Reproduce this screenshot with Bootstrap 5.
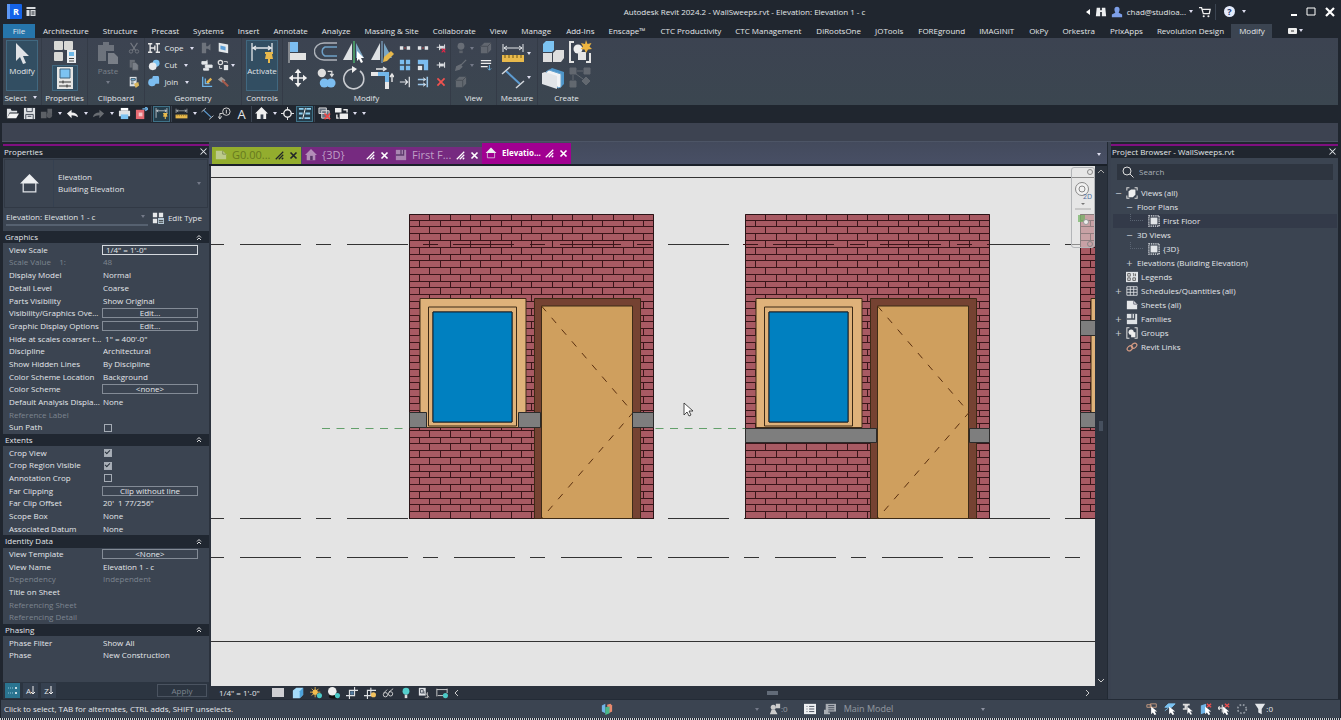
<!DOCTYPE html>
<html lang="en">
<head>
<meta charset="utf-8">
<meta name="viewport" content="width=device-width, initial-scale=1">
<title>Autodesk Revit 2024.2 - WallSweeps.rvt</title>
<link href="https://cdn.jsdelivr.net/npm/bootstrap@5.3.0/dist/css/bootstrap.min.css" rel="stylesheet">
<style>
:root{--ink:#20262f;--panel:#3b4451;--line:#2b323d;--txt:#e3e6ea;--dim:#7d8590;--mag:#800f80}
body{background:var(--ink);color:var(--txt);font:8px/12px "Open Sans","Noto Sans",sans-serif;overflow:hidden}
button,input,select{font:inherit;color:inherit;background:none;border:0;padding:0;border-radius:0}
button{display:flex;align-items:center;justify-content:center}
a{color:inherit;text-decoration:none}
svg{display:block;flex:none}
.ic{width:14px;height:14px}
.ic-s{width:12px;height:12px}
.ic-b{width:24px;height:24px}
.dimmed{opacity:.35}
.caret{width:9px;display:flex;justify-content:center}
.caret::after{content:"";border:2px solid transparent;border-top:3px solid #dde;border-bottom:0}
.titlebar{height:24px;padding:0 5px 0 3px}
.sp-l{flex:8}.sp-r{flex:3}
.winbtns{margin-left:42px}
.ribbon-tabs{height:14px;padding-left:3px}
.ribbon-tabs a{padding:0 7px;line-height:14px;white-space:nowrap}
.ribbon-tabs a:nth-child(odd):nth-child(n+13){padding-left:8px}
.ribbon-tabs a.file{background:#2675ab;width:32px;text-align:center;margin-right:1px}
.ribbon-tabs a.active{background:var(--panel)}
.ribbon{height:67px;margin:0 3px;background:linear-gradient(#3c4351,#3b4650)}
.rpanel{border-right:1px solid #343b47;display:flex;flex-direction:column;align-items:center;padding-top:1px;flex:none}
.rpanel:last-child{border:0}
.rbody{height:53px;display:flex;justify-content:center;align-items:center;width:100%}
.rlabel{line-height:12px;display:flex;align-items:center}
.w39{width:39px}.w46{width:46px}.w57{width:57px}.w97{width:97px}.w41{width:41px}.w168{width:168px}
.bigbtn{flex-direction:column;width:32px;height:51px;justify-content:flex-start;padding-top:1px}
.bigbtn.on,.tile.on{background:#324e62;outline:1px solid #416880;outline-offset:-1px}
.tile{width:26px;height:26px}
.g-small{display:grid;grid-auto-rows:17px;align-items:center;justify-items:center}
.g-start{justify-items:start}
.g-big{display:grid;grid-template-columns:repeat(4,28px);grid-auto-rows:26px;place-items:center}
.g-two{grid-template-columns:repeat(2,27px)}
.c3{grid-template-columns:repeat(3,18px)}
.qat{height:18px;padding-left:4px}
.qat button{width:17px;height:16px}
.qat svg{width:13px;height:13px}
.qat .on{background:#253d4b;outline:1px solid #3e7187;outline-offset:-1px}
.qat .glyph-a{font-size:13px}
.qsep{width:1px;height:16px;background:#3a4350;margin:0 1px}
.optbar{height:19px;margin:0 3px 0 2px;background:#3d4351;border-bottom:1px solid #4d5566}
.work{min-height:0}
.phead{height:12px;background:var(--ink);line-height:11px;padding:0 1px}
.props{width:206px;margin-left:3px;background:var(--panel);border-top:2px solid var(--mag);margin-top:2px}
.typebox{height:49px;margin:1px;border:1px solid #313945}
.typebox .pic{width:49px;border-right:1px solid #354050}
.typesel{height:18px;padding:0 3px}
.typesel .pick{height:17px;border-bottom:2px solid #566170}
.ptable{width:100%;height:431px;border-collapse:collapse;table-layout:fixed}
.ptable td,.ptable th{padding:0;white-space:nowrap;overflow:hidden;font-weight:400;line-height:10px;height:12px}
.ptable .sec th{background:#202731;padding:0 7px 0 2px;line-height:12px}
.ptable td:first-child{padding-left:6px;text-overflow:ellipsis}
.ptable .k{width:100px;padding:0}
.ptable .mute{color:var(--dim)}
.ptable button,.ptable .field{border:1px solid #838b96;width:96px;height:10px;line-height:8px;display:flex;margin-left:-1px}
.ptable .field{border:1px solid #d5d9de;padding-left:3px;display:block}
.ptable td:has(button),.ptable td:has(.field){overflow:visible}
.ptable input[type=checkbox]{appearance:none;width:8px;height:8px;border:1px solid #a4abb4;display:block;margin:1px 0 0 1px}
.ptable input:checked{background:#aab0b8}
.ptable input:checked::after{content:"";display:block;width:5px;height:3px;border:solid #27303b;border-width:0 0 1px 1px;transform:rotate(-45deg)}
.pfoot{height:17px;background:#2c3541;gap:3px;padding:0 2px 0 2px}
.pfoot .sq{width:15px;height:15px;background:#364150}
.pfoot .sq.on{background:#2a7490}
.pfoot .apply{width:50px;height:13px;border:1px solid #4a5360;color:var(--dim);line-height:10px}
.center{min-width:0;background:var(--line)}
.vtabs{height:24px;background:linear-gradient(#434a5c,#484f65);border-bottom:2px solid #1a2029;padding-left:3px}
.vtab{height:17px;width:90px;font-size:11px;padding:0 3px;background:#762a80;color:#bf9fc6}
.vtab.green{background:#93ad2e;color:#67791e;width:89px;margin-right:1px}
.vtab.active{height:21px;background:#a10091;color:#fff;font-size:8px;font-weight:700;width:89px}
.vtab span{margin-left:5px;flex:1;white-space:nowrap}
.vtab svg+svg{margin-left:5px}
.sheet{min-height:0;min-width:0;background:#e4e4e4;margin-left:2px;overflow:hidden}
.navbox{top:1px;right:0;width:24px;height:81px;border:1px solid #b3b5b8;border-radius:3px;background:#e8e8e880;align-items:center}
.vscroll{width:11px;margin-right:1px}
.vbar{height:13px;margin-left:2px;padding-left:8px;background:var(--line)}
.vbar .ic-s{margin-right:6px}
.browser{width:227px;margin:2px 3px 0 0;background:var(--panel);border-top:2px solid var(--mag)}
.dockgap{width:4px;background:#3a4250;border-left:1px solid #222a34}
.searchbox{margin:6px 5px 6px 6px;height:16px;background:#2e3540;padding:0 5px;gap:5px}
.searchbox input{width:100%;outline:0}
.searchbox input::placeholder{color:#aab0b8;opacity:1}
.tree{list-style:none;margin:0;padding:0 1px 0 2px}
.tree li{height:14px;display:flex;align-items:center;gap:3px;white-space:nowrap;padding-left:1px}
.tree .ex{width:9px;text-align:center;font-size:11px;color:#c5cbd3}
.tree .l1{padding-left:12px}.tree .l2{padding-left:35px}
.tree .l2::before{content:"";width:13px;height:7px;border:dotted #5a6472;border-width:0 0 1px 1px;margin:-7px 2px 0 -18px}
.tree .sel{background:#333a49}
.status{height:19px;background:#3b4451;margin:0 1px;padding-left:3px;border-top:1px solid #232b36}
.status .grow-a{flex:0 0 597px}.status .grow-b{flex:0 0 148px}
.status .opt{width:144px;font-size:9px}
.selbar{gap:6px;margin-right:67px}
.edge{height:2px;background:repeating-linear-gradient(90deg,#cfd3d8 0 1px,#20262f 1px 2px)}
</style>
</head>
<body class="d-flex flex-column vh-100">
<svg width="0" height="0" class="position-absolute" aria-hidden="true">
<defs>
<symbol id="i-arrow" viewBox="0 0 24 24"><path d="M6 2v18l4-4 3 7 3-1-3-7h6z" fill="#dfe2e6"/></symbol>
<symbol id="i-propgrid" viewBox="0 0 24 24"><g fill="#d9d9d6"><rect x="1" y="1" width="9" height="9" rx="1"/><rect x="11" y="1" width="9" height="9" rx="1"/><rect x="1" y="12" width="9" height="9" rx="1"/></g><path d="M14 10h9v13h-9z" fill="#e9edf0"/><path d="M16 12h5v4h-5z" fill="#6db8e8"/><path d="M16 18.500h5M16 21h5" stroke="#444"/></symbol>
<symbol id="i-prop" viewBox="0 0 24 24"><path d="M4 1h16v22H4z" fill="#e6e6e4"/><path d="M7 3h10v9H7z" fill="#7cc3f2" stroke="#3e637c"/><path d="M6 16h12M6 20h12M10 14.500v3M14 18.500v3" stroke="#333"/></symbol>
<symbol id="i-paste" viewBox="0 0 24 24"><path d="M2 4h5V1h6v3h5v6h-8v10H2z" fill="#c9cbce"/><path d="M12 12h6l4 4v7H12z" fill="#eee"/></symbol>
<symbol id="i-scis" viewBox="0 0 14 14"><path d="M3 1l6 9M11 1L5 10" stroke="#ddd" stroke-width="1.300"/><circle cx="3.500" cy="11" r="2" fill="none" stroke="#ddd"/><circle cx="10.500" cy="11" r="2" fill="none" stroke="#ddd"/></symbol>
<symbol id="i-copy" viewBox="0 0 14 14"><path d="M2 1h6v9H2z" fill="#bbb"/><path d="M5 4h4l3 3v6H5z" fill="#eee" stroke="#555" stroke-width=".6"/></symbol>
<symbol id="i-hide" viewBox="0 0 14 14"><path d="M1 1h8v9H1z" fill="#dfe2e5"/><path d="M3 3h3v4H3zM7 5v3" stroke="#39424f" fill="none"/><path d="M8 6l5 6M11 6v7M8 12h4" stroke="#bbb"/></symbol>
<symbol id="i-match" viewBox="0 0 14 14"><path d="M2 1h8v11H2z" fill="#dde1e5"/><path d="M3.500 3h5v2h-5zM3.500 7h3M3.500 9h3" stroke="#39505f" fill="#7cc3f2"/><path d="M7 9l5-2 1 4-4 3z" fill="#d9b65c"/></symbol>
<symbol id="i-cope" viewBox="0 0 14 14"><path d="M0 2h5M0 12h5M2.500 2v10M3 7h5M8 4v6M11 2v10M9 2h5M9 12h5" stroke="#e6e6e6" stroke-width="1.600" fill="none"/></symbol>
<symbol id="i-cut" viewBox="0 0 14 14"><circle cx="9.500" cy="5" r="4" fill="#7cc3f2"/><circle cx="5.500" cy="8.500" r="4.500" fill="#e8eaec"/></symbol>
<symbol id="i-join" viewBox="0 0 14 14"><path d="M5 3a4 4 0 018 0v6H9a4.500 4.500 0 11-4-6z" fill="#7cbdf0"/></symbol>
<symbol id="i-notch" viewBox="0 0 14 14"><path d="M1 1h5v4h2l3-3v8L8 8H6v5H1z" fill="#ccc"/></symbol>
<symbol id="i-face" viewBox="0 0 14 14"><path d="M2 1l11 2v10L2 11z" fill="#e5e9ec"/><path d="M4 4l6 1.500v4.500L4 8.500z" fill="#5d9fd8"/></symbol>
<symbol id="i-wall" viewBox="0 0 14 14"><path d="M1 3h6v3H1zM5 7h8v3H5zM3 11h6v2H3zM7 1v12" fill="#e3e6e9" stroke="#e3e6e9"/></symbol>
<symbol id="i-split" viewBox="0 0 14 14"><circle cx="4" cy="4" r="2.500" fill="none" stroke="#ddd" stroke-width="1.500"/><path d="M8 7h5v6H8z" fill="#e3e6e9"/><path d="M3 8v3h3M8 3h4v2" stroke="#ddd" fill="none"/></symbol>
<symbol id="i-demo" viewBox="0 0 14 14"><path d="M2 1v11h11M5 3v6h5" stroke="#6fb5e8" stroke-width="1.500" fill="none"/><path d="M6 7l5-5 2 2-5 5z" fill="#e5b34f"/></symbol>
<symbol id="i-hammer" viewBox="0 0 14 14"><path d="M1 4l4-3 5 4-4 3z" fill="#999"/><path d="M6 5l7 7" stroke="#a55b4c" stroke-width="2.500"/></symbol>
<symbol id="i-activate" viewBox="0 0 24 24"><path d="M2 2v18M22 2v10M3 7h18M6 5L3 7l3 2M18 5l3 2-3 2" stroke="#e3e6e9" fill="none" stroke-width="1.300"/><path d="M15 11h8v2h-1l1 5h-3v4h-2v-4h-3l1-5h-1z" fill="#e8b94c"/></symbol>
<symbol id="i-align" viewBox="0 0 24 24"><path d="M3 2v21" stroke="#ccc"/><path d="M4 2h8v10H4z" fill="#7cbdf0"/><path d="M4 13h16v7H4z" fill="#e3e3e3"/></symbol>
<symbol id="i-offset" viewBox="0 0 24 24"><path d="M23 3H10a9 8 0 000 17h13" stroke="#aeb3ba" fill="none" stroke-width="1.400"/><path d="M23 7H11a5 5 0 000 9h12" stroke="#6fa1c8" fill="none" stroke-width="1.400"/></symbol>
<symbol id="i-mirror" viewBox="0 0 24 24"><path d="M10 3v17H1z" fill="#dfe2e5"/><path d="M12 1v22" stroke="#4cae6c" stroke-width="1.500"/><path d="M14 3l8 15h-8z" fill="#7aa6c4"/><path d="M15 11v10l2-2 2 4 2-1-2-4h3z" fill="#fff"/></symbol>
<symbol id="i-mirror2" viewBox="0 0 24 24"><path d="M10 3v17H1z" fill="#dfe2e5"/><path d="M12 1v22" stroke="#8ab8dc"/><path d="M14 3l8 15h-8z" fill="#7aa6c4"/><path d="M13 22l1-5 7-6 3 3-7 7z" fill="#e8b94c"/></symbol>
<symbol id="i-move" viewBox="0 0 24 24"><path d="M12 1l4 5h-3v5h5V8l5 4-5 4v-3h-5v5h3l-4 5-4-5h3v-5H6v3l-5-4 5-4v3h5V6H8z" fill="#f2f2f2"/></symbol>
<symbol id="i-copyc" viewBox="0 0 24 24"><circle cx="7" cy="6" r="5" fill="#dedede"/><circle cx="10" cy="18" r="5.500" fill="#7cbdf0"/><circle cx="18" cy="18" r="5.500" fill="#7cbdf0"/><path d="M14 4h5v5M17 7l2 3 2-3" stroke="#ddd" fill="none" stroke-width="1.500"/></symbol>
<symbol id="i-rot" viewBox="0 0 24 24"><path d="M18 5a10 10 0 11-8-2" stroke="#c9ccd1" fill="none" stroke-width="1.600"/><path d="M10 0l5 3-5 4z" fill="#eee"/></symbol>
<symbol id="i-trim" viewBox="0 0 24 24"><path d="M1 8h16v15" stroke="#e6e6e6" stroke-width="4" fill="none"/><path d="M8 8h9v8" stroke="#72b7ea" stroke-width="4" fill="none"/><path d="M6 3h9M13 1l3 2-3 2M22 16V9M20 11l2-3 2 3" stroke="#e6e6e6" fill="none" stroke-width="1.400"/></symbol>
<symbol id="i-sp" viewBox="0 0 14 14"><path d="M1 5h4v4H1zM9 5h4v4H9z" fill="#e3e6e9"/><path d="M6 7h2" stroke="#e55"/></symbol>
<symbol id="i-array" viewBox="0 0 14 14"><path d="M1 1h5v5H1zM8 1h5v5H8zM1 8h5v5H1zM8 8h5v5H8z" fill="#7cbdf0"/></symbol>
<symbol id="i-scale" viewBox="0 0 14 14"><path d="M1 1h12v12H8V6H1z" fill="#7cbdf0"/><path d="M1 8h5v5H1z" fill="#e3e6e9"/></symbol>
<symbol id="i-ext" viewBox="0 0 14 14"><path d="M1 7h8M7 4l3 3-3 3M12 1v12" stroke="#e3e6e9" stroke-width="1.400" fill="none"/></symbol>
<symbol id="i-ext2" viewBox="0 0 14 14"><path d="M1 4h9M1 10h9M12 1v12" stroke="#9cc8ea" stroke-width="1.800" fill="none"/><path d="M7 2l3 2-3 2M7 8l3 2-3 2" stroke="#eee" fill="none"/></symbol>
<symbol id="i-pin" viewBox="0 0 14 14"><path d="M1 7h4M5 3v8M12 3v8" stroke="#dcdfe3" stroke-width="1.500"/><path d="M5 5h6v4H5z" fill="#dcdfe3"/></symbol>
<symbol id="i-pinx" viewBox="0 0 14 14"><path d="M1 6h4M5 2v8M12 2v8" stroke="#dcdfe3" stroke-width="1.400"/><path d="M5 4h6v4H5z" fill="#dcdfe3"/><path d="M8 8l5 5M13 8l-5 5" stroke="#e24" stroke-width="1.500"/></symbol>
<symbol id="i-x" viewBox="0 0 14 14"><path d="M2 2l10 10M12 2L2 12" stroke="#f0524f" stroke-width="2.400"/></symbol>
<symbol id="i-bulb" viewBox="0 0 14 14"><circle cx="7" cy="5" r="4" fill="#bbb"/><path d="M5 10h4v3H5z" fill="#999"/></symbol>
<symbol id="i-box" viewBox="0 0 14 14"><path d="M1 5l4-4h8v8l-4 4H1z" fill="#aaa"/><path d="M1 5h8v8M9 5l4-4" stroke="#555" fill="none"/></symbol>
<symbol id="i-brush" viewBox="0 0 14 14"><path d="M13 1L6 8M6 7l-4 2-1 4 4-1 3-3z" stroke="#bbb" stroke-width="1.500" fill="#bbb"/></symbol>
<symbol id="i-lw" viewBox="0 0 14 14"><path d="M1 2h12M1 5h12M1 9h8" stroke="#eee" stroke-width="1.500"/><path d="M11 7v6M9 11l2 2 2-2" stroke="#6db8e8" fill="none"/></symbol>
<symbol id="i-meas" viewBox="0 0 24 24"><path d="M2 3v8M22 3v8M3 7h18M6 5L3 7l3 2M18 5l3 2-3 2" stroke="#e3e6e9" fill="none"/><path d="M1 14h22v7H1z" fill="#e8b94c"/><path d="M4 14v3M8 14v3M12 14v3M16 14v3M20 14v3" stroke="#6d5413"/></symbol>
<symbol id="i-dim" viewBox="0 0 24 24"><path d="M5 6l14 13" stroke="#5d9bd0" stroke-width="2"/><path d="M1 9l8-7M15 23l8-7" stroke="#d4d8dd" stroke-width="1.500"/></symbol>
<symbol id="i-create" viewBox="0 0 24 24"><path d="M2 4l3-3h8v9l-2 2H2z" fill="#7cc3f2"/><path d="M2 13h9v9H2zM12 13l3-3h8v8l-3 4h-8z" fill="#dedede"/></symbol>
<symbol id="i-group" viewBox="0 0 24 24"><path d="M6 2H2v20h4M18 22h4v-9" stroke="#e3e3e3" fill="none" stroke-width="2"/><circle cx="10" cy="9" r="4.500" fill="#eee"/><path d="M10 12h8v8h-8z" fill="#e5e5e5"/><path d="M18 0l1.500 4 4-1-2 3.500L24 9l-4 .500L18 13l-1.500-3.500-4-.500 2.500-2.500-2-3.500 4 1z" fill="#eeb540"/></symbol>
<symbol id="i-assem" viewBox="0 0 24 24"><path d="M8 4l3-2 12 4v12l-3 3z" fill="#4d95c9"/><path d="M5 6l3-2 12 4v13l-3 1z" fill="#f1f3f5" stroke="#68a4d0"/><path d="M1 7l3-1 12 4v13L1 18z" fill="#e2e5e8"/></symbol>
<symbol id="i-parts" viewBox="0 0 24 24"><path d="M2 2h6v6H2zM16 2h6v6h-6zM2 15h6v6H2zM14 15l4-4 4 4-4 4zM9 5h6M5 9v5M8 8l7 5" fill="#aaa" stroke="#aaa"/></symbol>
<symbol id="i-open" viewBox="0 0 14 14"><path d="M1 12V2h4l1 2h6v2H4z" fill="#dfe2e5"/><path d="M4 7h10l-3 5H1z" fill="#f5f5f5"/></symbol>
<symbol id="i-save" viewBox="0 0 14 14"><path d="M1 1h12v12H1z" fill="#dfe2e5"/><path d="M4 1v4h6V1M3 13V8h8v5M5 10h4" stroke="#39424f" fill="none"/></symbol>
<symbol id="i-sync" viewBox="0 0 14 14"><path d="M1 5h6v7H1zM8 2h5v6H8z" fill="#ccc"/><circle cx="10" cy="9" r="3" fill="#bbb"/></symbol>
<symbol id="i-undo" viewBox="0 0 14 14"><path d="M1 7l5-4v3q6 0 7 5-3-2-7-2v3z" fill="#f0f0f0"/></symbol>
<symbol id="i-print" viewBox="0 0 14 14"><path d="M3 1h8v3H3z" fill="#fff"/><path d="M1 4h12v6H1z" fill="#dfe2e5"/><path d="M3 8h8v5H3z" fill="#7cc3f2"/></symbol>
<symbol id="i-pdf" viewBox="0 0 14 14"><path d="M1 3h9v10H1z" fill="#e56a72"/><path d="M4 6h4v4H4z" fill="#f6c3c6"/><path d="M8 2h4M11 0l3 2-3 2" stroke="#6fb5e8" stroke-width="1.500" fill="none"/></symbol>
<symbol id="i-tag" viewBox="0 0 14 14"><circle cx="9" cy="5" r="4" fill="none" stroke="#ddd"/><path d="M9 3v4M5 7H2v5M0 10l2 3 2-3" stroke="#ddd" fill="none"/></symbol>
<symbol id="i-home" viewBox="0 0 14 14"><path d="M7 0l7 7h-2v6H2V7H0z" fill="#f0f0f0"/><path d="M6 8h3v5H6z" fill="#39424f"/></symbol>
<symbol id="i-homeo" viewBox="0 0 20 20"><path d="M10 1l9 9H1z" fill="#eef0f2"/><path d="M4 9v9h12V9" stroke="#dfe2e6" stroke-width="1.200" fill="none"/></symbol>
<symbol id="i-sec" viewBox="0 0 14 14"><circle cx="7" cy="7" r="4" fill="none" stroke="#eee" stroke-width="1.500"/><path d="M7 0v3M7 11v3M0 7h3M11 7h3" stroke="#eee"/></symbol>
<symbol id="i-thin" viewBox="0 0 14 14"><path d="M1 2h5M9 2h5M1 7h4M8 7h5M1 12h3M7 12h6" stroke="#8fd0f0" stroke-width="2"/><path d="M8 1L5 13" stroke="#fff"/></symbol>
<symbol id="i-close" viewBox="0 0 14 14"><path d="M1 1h8v6H1zM4 4h8v8H4z" fill="#68717e" stroke="#ddd"/><path d="M7 7l6 6M13 7l-6 6" stroke="#f04848" stroke-width="1.800"/></symbol>
<symbol id="i-switch" viewBox="0 0 14 14"><path d="M0 1h7v5H0zM5 7h9v6H5z" fill="#eee"/><path d="M9 3h4v3M2 8v4h2" stroke="#eee" stroke-width="1.500" fill="none"/></symbol>
<symbol id="i-sheet" viewBox="0 0 14 14"><path d="M1 2h8l4 4v6H1z" fill="#e6e8ea"/><path d="M9 2v4h4" fill="none" stroke="#667"/></symbol>
<symbol id="i-plan" viewBox="0 0 14 14"><path d="M3 3h8v8H3z" fill="#e2e5e8"/><path d="M1 1h12v12H1z" fill="none" stroke="#e2e5e8" stroke-width="1.500" stroke-dasharray="1.500 1"/></symbol>
<symbol id="i-fam" viewBox="0 0 14 14"><path d="M1 1h12v12H1z" fill="#dfe2e5"/><path d="M7 1v6H1M7 7h3V1" stroke="#444d5a" fill="none" stroke-width="1.500"/></symbol>
<symbol id="i-views" viewBox="0 0 14 14"><path d="M4 1H1v3M1 10v3h3M10 13h3v-3M13 4V1h-3" stroke="#ddd" fill="none" stroke-width="1.200"/><path d="M3 5l3-2h5v6l-3 3H3z" fill="#eee"/></symbol>
<symbol id="i-grp" viewBox="0 0 14 14"><path d="M4 1H1v12h3M10 13h3V1h-3" stroke="#ddd" fill="none" stroke-width="1.200"/><circle cx="6" cy="6" r="3" fill="#eee"/><path d="M6 6h5v6H6z" fill="#eee"/></symbol>
<symbol id="i-leg" viewBox="0 0 14 14"><path d="M0 1h14v12H0z" fill="#e2e5e8"/><path d="M2 3h3v3H2zM8 3h1v3M11 3v3M2 8h3v3H2zM8 8h3v3H8z" fill="none" stroke="#555"/></symbol>
<symbol id="i-sch" viewBox="0 0 14 14"><path d="M1 2h12v10H1zM1 5h12M1 8.500h12M5 2v10M9 2v10" fill="none" stroke="#dfe2e5"/></symbol>
<symbol id="i-link" viewBox="0 0 14 14"><ellipse cx="4.500" cy="8.500" rx="3.500" ry="2.500" transform="rotate(-40 4.500 8.500)" fill="none" stroke="#d59b83" stroke-width="1.400"/><ellipse cx="9.500" cy="5.500" rx="3.500" ry="2.500" transform="rotate(-40 9.500 5.500)" fill="none" stroke="#d59b83" stroke-width="1.400"/></symbol>
<symbol id="i-type" viewBox="0 0 14 14"><path d="M1 1h5v5H1zM8 1h5v5H8zM1 8h5v5H1z" fill="#e6e8ea"/><path d="M7 7h7v7H7z" fill="#b5c7d4"/><path d="M8 10h5M8 12h5" stroke="#333"/></symbol>
<symbol id="i-hatch" viewBox="0 0 12 12"><path d="M1 11L11 1M5 11l6-6M9 11l2-2" stroke="currentColor" stroke-width="1.600"/></symbol>
<symbol id="i-cl" viewBox="0 0 12 12"><path d="M2 2l8 8M10 2l-8 8" stroke="currentColor" stroke-width="2.200"/></symbol>
<symbol id="i-clt" viewBox="0 0 12 12"><path d="M2 2l8 8M10 2l-8 8" stroke="currentColor" stroke-width="1.400"/></symbol>
<symbol id="i-dbl" viewBox="0 0 12 12"><path d="M2 6l4-4 4 4M2 11l4-4 4 4" stroke="#eee" stroke-width="1.800" fill="none"/></symbol>
<symbol id="i-cube" viewBox="0 0 14 14"><path d="M1 4l4-3h8v8l-4 4H1z" fill="#a5dcfa"/><path d="M9 5l4-4v8l-4 4z" fill="#4da2db"/></symbol>
<symbol id="i-sun" viewBox="0 0 14 14"><circle cx="6" cy="6" r="3" fill="#f3bd4e"/><path d="M6 0v12M0 6h12M2 2l8 8M10 2l-8 8" stroke="#f3bd4e"/><circle cx="11" cy="10" r="3" fill="#4cc9c6"/></symbol>
<symbol id="i-shad" viewBox="0 0 14 14"><ellipse cx="7" cy="11" rx="6" ry="2.500" fill="#111"/><circle cx="5" cy="5" r="5" fill="#eee"/><circle cx="11" cy="10" r="3" fill="#4cc9c6"/></symbol>
<symbol id="i-crop" viewBox="0 0 14 14"><path d="M0 10h10V0M4 14V4h10" stroke="#dfe2e5" fill="none" stroke-width="1.300"/><path d="M5 5h4v4H5z" fill="#547ca0"/></symbol>
<symbol id="i-crop2" viewBox="0 0 14 14"><path d="M0 10h8V1M4 14V4h10" stroke="#dfe2e5" fill="none" stroke-width="1.300"/><circle cx="11" cy="9" r="3" fill="#f3c25e"/></symbol>
<symbol id="i-glass" viewBox="0 0 14 14"><circle cx="4" cy="9" r="2.500" fill="none" stroke="#ddd"/><circle cx="10" cy="8" r="2.500" fill="none" stroke="#ddd"/><path d="M2 7l4-4M8 6l5-4" stroke="#ddd"/></symbol>
<symbol id="i-lamp" viewBox="0 0 14 14"><circle cx="7" cy="5" r="4" fill="#55d0cd"/><path d="M5.500 9h3v4h-3z" fill="#ddd"/></symbol>
<symbol id="i-cons" viewBox="0 0 14 14"><path d="M1 2v9M13 2v5M1 3h12M2 10h7" stroke="#ddd" fill="none"/><circle cx="11" cy="10" r="3" fill="#4cc9c6"/></symbol>
<symbol id="i-selr" viewBox="0 0 14 14"><path d="M1 2h5v3H1zM5 1h7v4H5z" fill="none" stroke="#d0a184"/><path d="M6 4v9l2-2 2 3 2-1-2-3h3z" fill="#fff"/></symbol>
<symbol id="i-selb" viewBox="0 0 14 14"><path d="M1 5l4-4h8L9 5zM1 9l4-3" fill="#7cc3f2" stroke="#7cc3f2"/><path d="M6 4v9l2-2 2 3 2-1-2-3h3z" fill="#fff"/></symbol>
<symbol id="i-selp" viewBox="0 0 14 14"><path d="M1 1h8v2H7v3h2v2H1V6h2V3H1z" fill="#ddd"/><path d="M6 4v9l2-2 2 3 2-1-2-3h3z" fill="#fff" stroke="#3b4451" stroke-width=".5"/></symbol>
<symbol id="i-self" viewBox="0 0 14 14"><path d="M1 3l6-2v10l-6 2z" fill="#6fb5e8"/><path d="M6 4v9l2-2 2 3 2-1-2-3h3z" fill="#fff"/><path d="M8 1l5 4M13 1L8 5" stroke="#f04f4f" stroke-width="1.500"/></symbol>
<symbol id="i-seld" viewBox="0 0 14 14"><path d="M0 6h8M5 2v9M2 4L0 6l2 2" stroke="#ddd" stroke-width="1.300" fill="none"/><path d="M6 4v9l2-2 2 3 2-1-2-3h3z" fill="#fff"/><path d="M8 1l5 4M13 1L8 5" stroke="#f04f4f" stroke-width="1.500"/></symbol>
<symbol id="i-gear" viewBox="0 0 14 14"><circle cx="7" cy="7" r="5" fill="none" stroke="#9097a0" stroke-width="2" stroke-dasharray="2 2"/></symbol>
<symbol id="i-filt" viewBox="0 0 14 14"><path d="M1 1h12L9 7v6l-4-2V7z" fill="#e3e6e9"/></symbol>
<symbol id="i-person" viewBox="0 0 14 14"><path d="M4 4a3 3 0 116 0c0 2-1 3-1 4l4 2v3H1v-3l4-2c0-1-1-2-1-4z" fill="#7d9fe8"/></symbol>
<symbol id="i-bino" viewBox="0 0 14 14"><path d="M2 2h4v3h2V2h4l1 10H8V7H6v5H1z" fill="#eceef0"/></symbol>
<symbol id="i-cart" viewBox="0 0 14 14"><path d="M0 2h3l2 7h7l1-5H4" stroke="#eee" stroke-width="1.500" fill="none"/><circle cx="5.500" cy="12" r="1.200" fill="#eee"/><circle cx="11" cy="12" r="1.200" fill="#eee"/></symbol>
<symbol id="i-ppl" viewBox="0 0 14 14"><circle cx="5" cy="5" r="3" fill="#ccc"/><path d="M1 13l2-5h4l3 5zM8 1h5v5H8z" fill="#ccc"/></symbol>
<symbol id="i-tri" viewBox="0 0 14 14"><path d="M1 3l4-2v11l-4-2z" fill="#6fb5e8"/><path d="M7 2l4-1 2 2v7l-4 2z" fill="#e8896d"/><path d="M5 5l5-1v8l-5 2z" fill="#4bb889"/></symbol>
<symbol id="i-doc" viewBox="0 0 14 14"><path d="M0 1h14v12H0z" fill="#eef0f2"/><path d="M3 4h1M6 4h6M3 7h1M6 7h6M3 10h1M6 10h6" stroke="#39424f"/></symbol>
<symbol id="i-docs" viewBox="0 0 14 14"><path d="M2 1h12v9H2z" fill="#cfd2d6"/><path d="M5 3h7M5 5.500h7M5 8h7" stroke="#39424f"/><path d="M0 8h5v3h2v2H0z" fill="#cfd2d6"/></symbol>
</defs></svg>

<header class="titlebar d-flex align-items-center">
  <svg class="ms-1" width="15" height="15" viewBox="0 0 15 15"><rect width="15" height="15" rx="1" fill="#1563e8"/><path d="M0 0h3v15H0z" fill="#5c97f5"/><text x="9" y="11" font-size="9" font-weight="700" fill="#fff" text-anchor="middle">R</text></svg>
  <svg class="ms-1" width="10" height="9" viewBox="0 0 9 9"><path d="M0 0h9v2H0zM0 3h3v6H0zM4 3h5v6H4z" fill="#d7dade"/><path d="M5 5h3M5 7h3" stroke="#20262f"/></svg>
  <span class="sp-l"></span>
  <span class="text-nowrap">Autodesk Revit 2024.2 - WallSweeps.rvt - Elevation: Elevation 1 - c</span>
  <span class="sp-r"></span>
  <svg width="5" height="6" viewBox="0 0 5 6"><path d="M4 0v6L0 3z" fill="#fff"/></svg>
  <button class="ms-1" aria-label="Search"><svg class="ic-s"><use href="#i-bino"/></svg></button>
  <button class="ms-1 text-nowrap"><svg class="ic-s me-1"><use href="#i-person"/></svg>chad@studioa...<span class="caret"></span></button>
  <button class="ms-1" aria-label="Cart"><svg class="ic-s"><use href="#i-cart"/></svg></button>
  <span class="qsep ms-1 me-2"></span>
  <button aria-label="Help"><svg width="11" height="11" viewBox="0 0 11 11"><circle cx="5.500" cy="5.500" r="5.500" fill="#e4ebfb"/><text x="5.500" y="9" font-size="9" font-weight="700" fill="#213a72" text-anchor="middle">?</text></svg><span class="caret ms-1"></span></button>
  <div class="winbtns d-flex align-items-center gap-2">
    <button aria-label="Minimize"><svg width="8" height="9"><path d="M1 8h6" stroke="#fff" stroke-width="2"/></svg></button>
    <button aria-label="Maximize"><svg width="10" height="9"><path d="M1 1h8v7H1z" stroke="#fff" fill="none"/></svg></button>
    <button class="text-white" aria-label="Close"><svg width="12" height="12"><use href="#i-cl"/></svg></button>
  </div>
</header>

<nav class="ribbon-tabs d-flex" aria-label="Ribbon tabs">
  <a href="#" class="file">File</a><a href="#">Architecture</a><a href="#">Structure</a><a href="#">Precast</a><a href="#">Systems</a><a href="#">Insert</a><a href="#">Annotate</a><a href="#">Analyze</a><a href="#">Massing &amp; Site</a><a href="#">Collaborate</a><a href="#">View</a><a href="#">Manage</a><a href="#">Add-Ins</a><a href="#">Enscape™</a><a href="#">CTC Productivity</a><a href="#">CTC Management</a><a href="#">DiRootsOne</a><a href="#">JOTools</a><a href="#">FOREground</a><a href="#">IMAGINiT</a><a href="#">OkPy</a><a href="#">Orkestra</a><a href="#">PrlxApps</a><a href="#">Revolution Design</a><a href="#" class="active">Modify</a>
  <button class="ms-3" aria-label="Ribbon display"><svg width="9" height="6"><rect width="9" height="6" rx="1" fill="#eee"/><path d="M3 3h3" stroke="#333"/></svg><span class="caret"></span></button>
</nav>

<section class="ribbon d-flex">
  <div class="rpanel w39"><div class="rbody"><button class="bigbtn on"><svg class="ic-b"><use href="#i-arrow"/></svg><span>Modify</span></button></div><div class="rlabel">Select<span class="caret ms-1"></span></div></div>
  <div class="rpanel w46"><div class="rbody flex-column"><button class="tile" aria-label="Type properties"><svg class="ic-b"><use href="#i-propgrid"/></svg></button><button class="tile on" aria-label="Properties"><svg class="ic-b"><use href="#i-prop"/></svg></button></div><div class="rlabel">Properties</div></div>
  <div class="rpanel w57"><div class="rbody"><button class="bigbtn dimmed"><svg class="ic-b"><use href="#i-paste"/></svg><span class="mb-1">Paste</span><span class="caret"></span></button>
    <div class="g-small ms-1"><svg class="ic-s dimmed"><use href="#i-scis"/></svg><svg class="ic-s dimmed"><use href="#i-copy"/></svg><svg class="ic-s"><use href="#i-match"/></svg></div></div><div class="rlabel">Clipboard</div></div>
  <div class="rpanel w97"><div class="rbody">
    <div class="g-small g-start"><button><svg class="ic-s"><use href="#i-cope"/></svg><span class="ms-1">Cope</span><span class="caret ms-1"></span></button><button><svg class="ic-s"><use href="#i-cut"/></svg><span class="ms-1">Cut</span><span class="caret ms-1"></span></button><button><svg class="ic-s"><use href="#i-join"/></svg><span class="ms-1">Join</span><span class="caret ms-1"></span></button></div>
    <div class="g-small ms-1"><svg class="ic-s dimmed"><use href="#i-notch"/></svg><svg class="ic-s"><use href="#i-wall"/></svg><svg class="ic-s"><use href="#i-demo"/></svg></div>
    <div class="g-small ms-1"><svg class="ic-s"><use href="#i-face"/></svg><svg class="ic-s"><use href="#i-split"/></svg><svg class="ic-s"><use href="#i-hammer"/></svg></div><span class="caret"></span></div><div class="rlabel">Geometry</div></div>
  <div class="rpanel w41"><div class="rbody"><button class="bigbtn on"><svg class="ic-b"><use href="#i-activate"/></svg><span>Activate</span></button></div><div class="rlabel">Controls</div></div>
  <div class="rpanel w168"><div class="rbody">
    <div class="g-big"><svg class="ic-b"><use href="#i-align"/></svg><svg class="ic-b"><use href="#i-offset"/></svg><svg class="ic-b"><use href="#i-mirror"/></svg><svg class="ic-b"><use href="#i-mirror2"/></svg><svg width="20" height="20"><use href="#i-move"/></svg><svg width="20" height="20"><use href="#i-copyc"/></svg><svg class="ic-b"><use href="#i-rot"/></svg><svg class="ic-b"><use href="#i-trim"/></svg></div>
    <div class="g-small c3"><svg class="ic-s"><use href="#i-sp"/></svg><svg class="ic-s"><use href="#i-sp"/></svg><svg width="10" height="10"><use href="#i-pinx"/></svg><svg class="ic-s"><use href="#i-array"/></svg><svg class="ic-s"><use href="#i-scale"/></svg><svg width="10" height="10"><use href="#i-pin"/></svg><svg class="ic-s"><use href="#i-ext"/></svg><svg class="ic-s"><use href="#i-ext2"/></svg><svg width="10" height="10"><use href="#i-x"/></svg></div></div><div class="rlabel">Modify</div></div>
  <div class="rpanel w46"><div class="rbody">
    <div class="g-small g-start dimmed"><div class="d-flex align-items-center"><svg class="ic-s"><use href="#i-bulb"/></svg><span class="caret"></span></div><div class="d-flex align-items-center"><svg class="ic-s"><use href="#i-brush"/></svg><span class="caret"></span></div><svg class="ic-s"><use href="#i-box"/></svg></div>
    <div class="g-small ms-1"><svg class="ic-s dimmed"><use href="#i-box"/></svg><svg class="ic-s"><use href="#i-lw"/></svg><span></span></div></div><div class="rlabel">View</div></div>
  <div class="rpanel w41"><div class="rbody flex-column"><button><svg class="ic-b"><use href="#i-meas"/></svg><span class="caret"></span></button><button><svg class="ic-b"><use href="#i-dim"/></svg><span class="caret"></span></button></div><div class="rlabel">Measure</div></div>
  <div class="rpanel w57"><div class="rbody"><div class="g-big g-two"><svg class="ic-b"><use href="#i-create"/></svg><svg class="ic-b"><use href="#i-group"/></svg><svg class="ic-b"><use href="#i-assem"/></svg><svg class="ic-b dimmed"><use href="#i-parts"/></svg></div></div><div class="rlabel">Create</div></div>
</section>

<div class="qat d-flex align-items-center" id="qat"></div>
<div class="optbar"></div>

<main class="work d-flex flex-grow-1">
  <aside class="props d-flex flex-column flex-shrink-0">
    <div class="phead d-flex justify-content-between align-items-center">Properties<button aria-label="Close properties"><svg width="9" height="9"><use href="#i-clt"/></svg></button></div>
    <div class="typebox d-flex align-items-center">
      <div class="pic h-100 d-flex align-items-center justify-content-center"><svg width="21" height="21"><use href="#i-homeo"/></svg></div>
      <div class="flex-grow-1 ps-1">Elevation<br>Building Elevation</div><span class="caret me-1 dimmed"></span>
    </div>
    <div class="typesel d-flex align-items-center">
      <button class="pick flex-grow-1 justify-content-between me-1">Elevation: Elevation 1 - c<span class="caret dimmed"></span></button>
      <button class="me-1"><svg class="ic-s me-1"><use href="#i-type"/></svg>Edit Type</button>
    </div>
    <table class="ptable mt-1"><colgroup><col class="k"><col></colgroup><tbody id="props"></tbody></table>
    <div class="flex-grow-1"></div>
    <div class="pfoot d-flex align-items-center">
      <button class="sq on" aria-label="Group"><svg width="11" height="11" viewBox="0 0 11 11"><path d="M1 3h5M1 8h5" stroke="#8ec3d8" stroke-dasharray="1 1"/><circle cx="9" cy="3" r="1" fill="#fff"/><circle cx="9" cy="8" r="1" fill="#fff"/></svg></button>
      <button class="sq" aria-label="Sort ascending">A<svg width="4" height="9"><path d="M2 0v8M0 6l2 2 2-2" stroke="#eee" fill="none"/></svg></button>
      <button class="sq" aria-label="Sort descending">Z<svg width="4" height="9"><path d="M2 0v8M0 6l2 2 2-2" stroke="#eee" fill="none"/></svg></button>
      <button class="apply ms-auto" disabled>Apply</button>
    </div>
  </aside>

  <section class="center flex-grow-1 d-flex flex-column">
    <div class="vtabs d-flex align-items-end">
      <div class="vtab green d-flex align-items-center"><svg class="ic-s opacity-50"><use href="#i-sheet"/></svg><span>G0.00...</span><svg class="text-dark" width="9" height="9"><use href="#i-hatch"/></svg><svg class="text-dark" width="9" height="9"><use href="#i-cl"/></svg></div>
      <div class="vtab d-flex align-items-center"><svg class="ic-s opacity-50"><use href="#i-home"/></svg><span>{3D}</span><svg class="text-white" width="9" height="9"><use href="#i-hatch"/></svg><svg class="text-white" width="9" height="9"><use href="#i-cl"/></svg></div>
      <div class="vtab d-flex align-items-center"><svg class="ic-s opacity-50"><use href="#i-fam"/></svg><span>First F...</span><svg class="text-white" width="9" height="9"><use href="#i-hatch"/></svg><svg class="text-white" width="9" height="9"><use href="#i-cl"/></svg></div>
      <div class="vtab active d-flex align-items-center"><svg class="ic-s"><use href="#i-homeo"/></svg><span>Elevatio...</span><svg width="9" height="9"><use href="#i-hatch"/></svg><svg width="9" height="9"><use href="#i-cl"/></svg></div>
      <span class="caret ms-auto me-1 mb-2"></span>
    </div>
    <div class="d-flex flex-grow-1 work">
      <div class="sheet flex-grow-1 position-relative">
        <svg class="w-100 h-100" viewBox="211 166 884 521" preserveAspectRatio="xMinYMin slice" role="img" aria-label="Wall elevation">
          <defs>
            <path id="bricks" stroke="#3a1519" stroke-width="1" fill="none" shape-rendering="crispEdges"/>
            <g id="bay">
              <path d="M0 0h245v305H0z" fill="#a85a63"/>
              <use href="#bricks"/>
              <path d="M.500 .500h244v304H.500z" fill="none" stroke="#2a1417"/>
              <g stroke="#3d2a16">
                <path d="M11 84.500h106v129H11z" fill="#dfb27a"/>
                <path d="M19.500 93h88v119h-88zM24 98h79v110H24z" fill="#dfb27a"/>
                <path d="M24 98h79v110H24z" fill="#0080c0" stroke="#123"/>
                <path d="M125.500 84.500h106v220h-106z" fill="#754232"/>
                <path d="M132.500 92h91v212.500h-91z" fill="#cf9f5e"/>
                <path d="M132.500 92L224 198.500 132.500 304.500" fill="none" stroke="#5b3010" stroke-dasharray="7 8.500"/>
              </g>
            </g>
          </defs>
          <g stroke="#333" shape-rendering="crispEdges">
            <path d="M211 177.500h884M211 641.500h884"/>
            <path d="M133 244.500h962M133 518.500h962M133 557.500h962" stroke-dasharray="61 15 15 16"/>
          </g>
          <path d="M322 428.500h430" stroke="#63a06b" stroke-dasharray="8 6.500"/>
          <use href="#bay" x="409" y="214"/><use href="#bay" x="745" y="214"/><use href="#bay" x="1080" y="214"/>
          <path d="M423 244.500h228M743 244.500h246" stroke="#3a1519" stroke-dasharray="15 15 61 16" shape-rendering="crispEdges"/>
          <g fill="#7e7e7e" stroke="#2b2b2b">
            <path d="M409.500 412.500h17v15h-17zM518.500 412.500h22v15h-22zM632.500 412.500h21v15h-21zM745.500 428.500h131v14h-131zM969.500 428.500h20v14h-20zM1080.500 412.500h20v15h-20zM1080.500 320.500h20v15h-20z"/>
          </g>
          <path d="M684 403v12l3-3 2 4 2-1-2-4h4z" fill="#fff" stroke="#222" stroke-width=".8"/>
        </svg>
        <div class="navbox position-absolute d-flex flex-column">
          <svg width="22" height="80" viewBox="0 0 22 80"><circle cx="18" cy="4" r="2.500" fill="none" stroke="#888"/><circle cx="10" cy="21" r="6.500" fill="#f1f1f1" stroke="#888"/><circle cx="10" cy="21" r="3" fill="none" stroke="#888"/><text x="11" y="31" font-size="7" fill="#4a6b9d">2D</text><path d="M9 35h4l-2 2z" fill="#777"/><path d="M3 41h16" stroke="#aaa"/><path d="M6 47h7v7H6z" fill="#6fb160" opacity=".7"/><circle cx="14" cy="54" r="2.500" fill="#eee" stroke="#999"/><circle cx="18" cy="76" r="2.500" fill="none" stroke="#888"/></svg>
        </div>
      </div>
      <div class="vscroll d-flex flex-column align-items-center justify-content-between"><svg width="8" height="10" viewBox="0 0 8 10"><path d="M1 7l3-3 3 3" stroke="#aaa" fill="none"/></svg><svg width="4" height="10"><rect width="4" height="10" fill="#46505e"/></svg><svg width="8" height="10" viewBox="0 0 8 10"><path d="M1 3l3 3 3-3" stroke="#ccc" fill="none"/></svg></div>
    </div>
    <div class="vbar d-flex align-items-center">
      <span class="text-nowrap me-2">1/4" = 1'-0"</span>
      <svg width="12" height="9" class="ms-1 me-2"><rect width="12" height="9" fill="#cfcfd3"/></svg><svg class="ic-s"><use href="#i-cube"/></svg><svg class="ic-s"><use href="#i-sun"/></svg><svg class="ic-s"><use href="#i-shad"/></svg><svg class="ic-s"><use href="#i-crop"/></svg><svg class="ic-s"><use href="#i-crop2"/></svg><svg class="ic-s"><use href="#i-glass"/></svg><svg class="ic-s"><use href="#i-lamp"/></svg><svg class="ic-s"><use href="#i-hide"/></svg><svg class="ic-s"><use href="#i-cons"/></svg><svg width="6" height="8" viewBox="0 0 6 8"><path d="M4 1L1 4l3 3" stroke="#ccc" fill="none"/></svg>
      <span class="flex-grow-1 d-flex justify-content-center"><svg width="11" height="4"><rect width="11" height="4" fill="#626b78"/></svg></span><svg class="me-3" width="6" height="8" viewBox="0 0 6 8"><path d="M1 1l3 3-3 3" stroke="#ccc" fill="none"/></svg>
    </div>
  </section>
  <div class="dockgap"></div>

  <aside class="browser flex-shrink-0">
    <div class="phead d-flex justify-content-between align-items-center">Project Browser - WallSweeps.rvt<button aria-label="Close browser"><svg width="9" height="9"><use href="#i-clt"/></svg></button></div>
    <label class="searchbox d-flex align-items-center"><svg width="12" height="12" viewBox="0 0 12 12"><circle cx="5" cy="5" r="4" fill="none" stroke="#ddd"/><path d="M8 8l3.500 3.500" stroke="#ddd"/></svg><input type="text" placeholder="Search" aria-label="Search project browser"></label>
    <ul class="tree">
      <li><span class="ex">−</span><svg class="ic-s"><use href="#i-views"/></svg>Views (all)</li>
      <li class="l1"><span class="ex">−</span>Floor Plans</li>
      <li class="l2 sel"><svg class="ic-s"><use href="#i-plan"/></svg>First Floor</li>
      <li class="l1"><span class="ex">−</span>3D Views</li>
      <li class="l2"><svg class="ic-s"><use href="#i-plan"/></svg>{3D}</li>
      <li class="l1"><span class="ex">+</span>Elevations (Building Elevation)</li>
      <li><span class="ex"></span><svg class="ic-s"><use href="#i-leg"/></svg>Legends</li>
      <li><span class="ex">+</span><svg class="ic-s"><use href="#i-sch"/></svg>Schedules/Quantities (all)</li>
      <li><span class="ex"></span><svg class="ic-s"><use href="#i-sheet"/></svg>Sheets (all)</li>
      <li><span class="ex">+</span><svg class="ic-s"><use href="#i-fam"/></svg>Families</li>
      <li><span class="ex">+</span><svg class="ic-s"><use href="#i-grp"/></svg>Groups</li>
      <li><span class="ex"></span><svg class="ic-s"><use href="#i-link"/></svg>Revit Links</li>
    </ul>
  </aside>
</main>

<footer class="status d-flex align-items-center">
  <span class="grow-a text-nowrap">Click to select, TAB for alternates, CTRL adds, SHIFT unselects.</span>
  <svg class="ic-s"><use href="#i-tri"/></svg><span class="grow-b d-flex justify-content-end dimmed"><span class="caret"></span></span>
  <svg class="ic-s ms-2"><use href="#i-ppl"/></svg><span class="opacity-50">:0</span>
  <svg class="ic-s ms-3"><use href="#i-doc"/></svg><svg class="ic-s ms-2 opacity-75"><use href="#i-docs"/></svg>
  <button class="opt ms-2 justify-content-between opacity-50">Main Model<span class="caret"></span></button>
  <span class="selbar ms-auto d-flex align-items-center"><svg class="ic-s"><use href="#i-selr"/></svg><svg class="ic-s"><use href="#i-selb"/></svg><svg class="ic-s"><use href="#i-selp"/></svg><svg class="ic-s"><use href="#i-self"/></svg><svg class="ic-s"><use href="#i-seld"/></svg><svg class="ic-s"><use href="#i-gear"/></svg><span class="d-flex"><svg class="ic-s"><use href="#i-filt"/></svg>:0</span></span>
</footer>
<div class="edge"></div>

<script src="https://cdn.jsdelivr.net/npm/bootstrap@5.3.0/dist/js/bootstrap.bundle.min.js"></script>
<script>
// Running-bond brick joints: courses counted up from the base line of the wall
const W = 245, H = 305, course = 6.78, step = 20.36;
let d = '';
for (let i = 0; i < 45; i++) {
  const bottom = H - 1 - i * course, top = Math.max(bottom - course, 0);
  d += `M0 ${Math.round(bottom) + .5}H${W}`;
  for (let x = i % 2 ? step / 2 : step; x < W - 2; x += step)
    d += `M${Math.round(x) + .5} ${Math.round(top)}V${Math.round(bottom)}`;
}
document.getElementById('bricks').setAttribute('d', d);

// Quick access toolbar: v = drop-down caret, | = separator, leading * = switched on, leading ~ = unavailable
const qat = 'open save ~sync v undo v ~redo v print pdf | *activate | meas v dim tag A | home v sec *thin | close switch v v'.split(' ');
document.getElementById('qat').innerHTML = qat.map(n => {
  if (n === 'v') return '<span class="caret"></span>';
  if (n === '|') return '<span class="qsep"></span>';
  const cls = n[0] === '*' ? 'on' : n[0] === '~' ? 'dimmed' : '';
  n = n.replace(/[*~]/, '');
  if (n === 'A') return '<button class="glyph-a">A</button>';
  const flip = n === 'redo' ? ' style="transform:scaleX(-1)"' : '';
  return `<button class="${cls}" aria-label="${n}"><svg${flip}><use href="#i-${n === 'redo' ? 'undo' : n}"/></svg></button>`;
}).join('');

// Property rows: [name, kind, value]; s section, t text, m unavailable, b button, f field, c checkbox
const rows = [
  ['Graphics','s'],['View Scale','f','1/4" = 1\'-0"'],['Scale Value &nbsp;&nbsp; 1:','m','48'],['Display Model','t','Normal'],['Detail Level','t','Coarse'],
  ['Parts Visibility','t','Show Original'],['Visibility/Graphics Ove...','b','Edit...'],['Graphic Display Options','b','Edit...'],
  ['Hide at scales coarser t...','t','&nbsp;1" = 400\'-0"'],['Discipline','t','Architectural'],['Show Hidden Lines','t','By Discipline'],
  ['Color Scheme Location','t','Background'],['Color Scheme','b','&lt;none&gt;'],['Default Analysis Displa...','t','None'],['Reference Label','m',''],['Sun Path','c',0],
  ['Extents','s'],['Crop View','c',1],['Crop Region Visible','c',1],['Annotation Crop','c',0],['Far Clipping','b','Clip without line'],
  ['Far Clip Offset','t','20\' &nbsp;1 77/256"'],['Scope Box','t','None'],['Associated Datum','t','None'],
  ['Identity Data','s'],['View Template','b','&lt;None&gt;'],['View Name','t','Elevation 1 - c'],['Dependency','m','Independent'],
  ['Title on Sheet','t',''],['Referencing Sheet','m',''],['Referencing Detail','m',''],
  ['Phasing','s'],['Phase Filter','t','Show All'],['Phase','t','New Construction']];
document.getElementById('props').innerHTML = rows.map(([name, kind, val], i) => {
  if (kind === 's') return `<tr class="sec"><th colspan="2"><span class="d-flex justify-content-between align-items-center">${name}<svg width="6" height="7"><use href="#i-dbl"/></svg></span></th></tr>`;
  const cell = kind === 'b' ? `<button>${val}</button>`
    : kind === 'f' ? `<input class="field" id="p${i}" value='${val.replace(/'/g, '&#39;')}'>`
    : kind === 'c' ? `<input type="checkbox" id="p${i}" ${val ? 'checked' : ''}>` : val;
  const label = kind === 'f' || kind === 'c' ? `<label for="p${i}">${name}</label>` : name;
  return `<tr class="${kind === 'm' ? 'mute' : ''}"><td>${label}</td><td>${cell}</td></tr>`;
}).join('');
</script>
</body>
</html>
